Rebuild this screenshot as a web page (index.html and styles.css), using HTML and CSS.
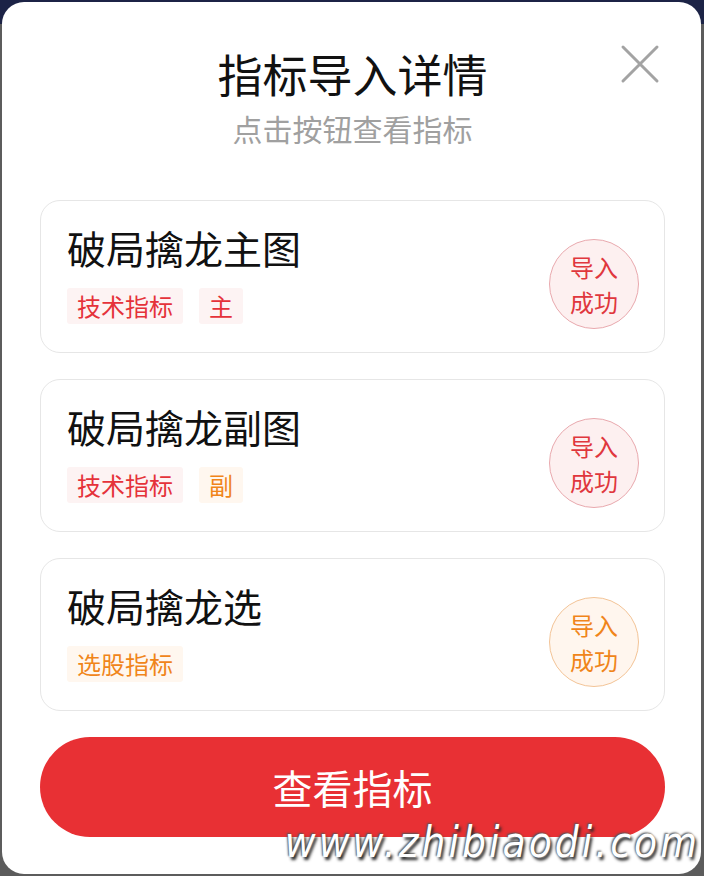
FILE: index.html
```html
<!DOCTYPE html>
<html lang="zh-CN">
<head>
    <meta charset="UTF-8">
    <meta name="viewport" content="width=device-width, initial-scale=1.0">
    <title>指标导入详情</title>
    <link rel="stylesheet" href="styles.css">
</head>
<body>
    <div class="modal">
        <button class="close" aria-label="关闭">
            <svg width="40" height="40" viewBox="0 0 40 40">
                <path d="M3 3 L37 37 M37 3 L3 37" stroke="#a3a3a3" stroke-width="3" stroke-linecap="round" fill="none"/>
            </svg>
        </button>
        <h2 class="title">指标导入详情</h2>
        <p class="subtitle">点击按钮查看指标</p>

        <div class="list">
            <div class="card">
                <div class="info">
                    <div class="name">破局擒龙主图</div>
                    <div class="tags">
                        <span class="tag red">技术指标</span>
                        <span class="tag red">主</span>
                    </div>
                </div>
                <div class="badge red">导入<br>成功</div>
            </div>
            <div class="card">
                <div class="info">
                    <div class="name">破局擒龙副图</div>
                    <div class="tags">
                        <span class="tag red">技术指标</span>
                        <span class="tag orange">副</span>
                    </div>
                </div>
                <div class="badge red">导入<br>成功</div>
            </div>
            <div class="card">
                <div class="info">
                    <div class="name">破局擒龙选</div>
                    <div class="tags">
                        <span class="tag orange">选股指标</span>
                    </div>
                </div>
                <div class="badge orange">导入<br>成功</div>
            </div>
        </div>

        <button class="view-btn">查看指标</button>
    </div>

    <!-- 水印 -->
    <div class="watermark">www.zhibiaodi.com</div>
</body>
</html>
```

FILE: styles.css
```css
body {
    margin: 0;
    padding: 2px 3px 2px 2px;
    background: linear-gradient(#1c2346 0, #1c2346 24px, #5c5c5c 24px);
    font-family: 'Noto Sans CJK SC', 'Noto Sans', sans-serif;
    position: relative;
}
.modal {
    position: relative;
    background-color: #fff;
    border-radius: 22px;
    height: 872px;
    box-sizing: border-box;
    padding: 46px 36px 37px 38px;
    display: flex;
    flex-direction: column;
}
.close {
    position: absolute;
    top: 42px;
    right: 41px;
    width: 40px;
    height: 40px;
    padding: 0;
    border: none;
    background: none;
    cursor: pointer;
}
.close svg {
    display: block;
}
.title {
    margin: 0;
    text-align: center;
    font-size: 45px;
    line-height: 52px;
    font-weight: 400;
    color: #111;
}
.subtitle {
    margin: 8px 0 0;
    text-align: center;
    font-size: 30px;
    line-height: 40px;
    color: #a0a0a0;
}
.list {
    margin-top: 52px;
    display: flex;
    flex-direction: column;
    gap: 26px;
}
.card {
    height: 153px;
    box-sizing: border-box;
    border: 1px solid #e6e6e6;
    border-radius: 20px;
    padding: 23px 25px 0 26px;
    display: flex;
    justify-content: space-between;
    align-items: flex-start;
}
.name {
    font-size: 39px;
    line-height: 46px;
    color: #111;
}
.tags {
    margin-top: 18px;
    display: flex;
    gap: 16px;
}
.tag {
    height: 36px;
    line-height: 36px;
    padding: 0 10px;
    font-size: 24px;
    border-radius: 3px;
}
.tag.red {
    color: #e5323a;
    background-color: #fdf3f3;
}
.tag.orange {
    color: #f0851a;
    background-color: #fff7ef;
}
.badge {
    width: 90px;
    height: 90px;
    margin-top: 15px;
    box-sizing: border-box;
    border-radius: 50%;
    display: flex;
    align-items: center;
    justify-content: center;
    text-align: center;
    font-size: 24px;
    line-height: 35px;
}
.badge.red {
    color: #e0373d;
    background-color: #fdf0f0;
    border: 1px solid #e9a9ae;
}
.badge.orange {
    color: #f0851a;
    background-color: #fff6ee;
    border: 1px solid #f3c497;
}
.view-btn {
    margin-top: 26px;
    height: 100px;
    border: none;
    border-radius: 50px;
    background-color: #e83034;
    color: #fff;
    font-family: inherit;
    font-size: 40px;
    cursor: pointer;
}
.watermark {
    position: absolute;
    right: 4px;
    bottom: 12px;
    font-family: 'DejaVu Sans Condensed', 'DejaVu Sans', sans-serif;
    font-style: italic;
    font-size: 42px;
    line-height: 1;
    letter-spacing: 3px;
    color: #fff;
    text-shadow: 2px 3px 3px #2a2a2a, -1px -1px 2px #555;
}
```
